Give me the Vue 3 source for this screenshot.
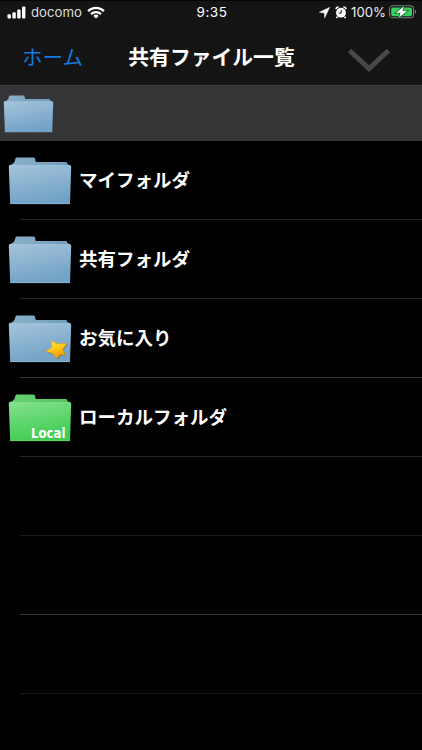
<template>
    <div class="screen">
        <svg class="defs" width="0" height="0">
            <defs>
                <linearGradient id="blueFront" x1="0.1" y1="0" x2="0.4" y2="1">
                    <stop offset="0" stop-color="#a3c3da"/>
                    <stop offset="1" stop-color="#72a2c6"/>
                </linearGradient>
                <linearGradient id="blueBack" x1="0" y1="0" x2="1" y2="0">
                    <stop offset="0" stop-color="#8bb1cb"/>
                    <stop offset="1" stop-color="#6f9cbb"/>
                </linearGradient>
                <linearGradient id="greenFront" x1="0.1" y1="0" x2="0.4" y2="1">
                    <stop offset="0" stop-color="#82e08b"/>
                    <stop offset="1" stop-color="#40cc53"/>
                </linearGradient>
                <linearGradient id="greenBack" x1="0" y1="0" x2="1" y2="0">
                    <stop offset="0" stop-color="#66d372"/>
                    <stop offset="1" stop-color="#51c260"/>
                </linearGradient>
                <linearGradient id="gold" x1="0" y1="0" x2="0.4" y2="1">
                    <stop offset="0" stop-color="#ffee55"/>
                    <stop offset="0.5" stop-color="#ffcb1c"/>
                    <stop offset="1" stop-color="#f29c08"/>
                </linearGradient>
            </defs>
        </svg>

        <header class="top">
            <div class="status">
                <div class="status-left">
                    <svg class="signal" width="19" height="13" viewBox="0 0 19 13" fill="#fff">
                        <rect x="0.5" y="8.2" width="3.4" height="4.3" rx="1"/>
                        <rect x="5.4" y="6.2" width="3.4" height="6.3" rx="1"/>
                        <rect x="10.2" y="3.5" width="3.4" height="9" rx="1"/>
                        <rect x="15" y="0.5" width="3.4" height="12" rx="1"/>
                    </svg>
                    <span class="carrier">docomo</span>
                    <svg width="18" height="13" viewBox="0 0 18 13" fill="none" stroke="#fff">
                        <path d="M1.1 5.1a11.2 11.2 0 0 1 15.8 0" stroke-width="2.3"/>
                        <path d="M4 8.1a7.1 7.1 0 0 1 10 0" stroke-width="2.2"/>
                        <path d="M9 12.6L6.3 9.9a3.9 3.9 0 0 1 5.4 0z" fill="#fff" stroke="none"/>
                    </svg>
                </div>
                <span class="clock">9:35</span>
                <div class="status-right">
                    <svg width="11" height="11" viewBox="0 0 11 11"><path d="M10.7 0.3L0.3 5.3l5 0.6 0.4 5z" fill="#fff" stroke="#fff" stroke-width="0.4"/></svg>
                    <svg class="alarm" width="12" height="13" viewBox="0 0 12 13">
                        <path d="M1 3.2A2.6 2.6 0 0 1 3.6 1M8.4 1a2.6 2.6 0 0 1 2.6 2.2M2.4 10.8l-1 1.2M9.6 10.8l1 1.2" fill="none" stroke="#fff" stroke-width="1.7"/>
                        <circle cx="6" cy="6.7" r="4.9" fill="#fff"/>
                        <path d="M6.2 3.9v3.2H3.7" fill="none" stroke="#161616" stroke-width="1"/>
                    </svg>
                    <span class="percent">100%</span>
                    <svg width="28" height="14" viewBox="0 0 28 14">
                        <rect x="0.6" y="0.8" width="24" height="12" rx="3.4" fill="none" stroke="#7c7c7c" stroke-width="1.1"/>
                        <rect x="2.2" y="2.4" width="20.8" height="8.8" rx="2" fill="#32d25c"/>
                        <path d="M26 4.8a2.2 2.2 0 0 1 0 4z" fill="#7c7c7c"/>
                        <path class="bolt" d="M14.8 1.4L6.8 7.8h4.6l-1.4 4.8 8.400-6.800h-4.900z"/>
                    </svg>
                </div>
            </div>
            <nav class="nav">
                <a class="home">ホーム</a>
                <h1>共有ファイル一覧</h1>
                <svg class="chevron" width="44" height="26" viewBox="0 0 44 26">
                    <path d="M2.5 2.5L22 20.5 41.5 2.5" fill="none" stroke="#484848" stroke-width="5"/>
                </svg>
            </nav>
        </header>

        <div class="crumbs">
            <svg class="crumb-folder" viewBox="0 0 64 48">
                <path :d="backShape" fill="url(#blueBack)"/>
                <path :d="frontShape" fill="url(#blueFront)"/>
            </svg>
        </div>

        <ul class="list">
            <li v-for="(row, i) in rows" :key="i" :class="row.line">
                <template v-if="row.name">
                    <svg class="folder" width="64" height="48" viewBox="0 0 64 48">
                        <path :d="backShape" :fill="`url(#${row.color}Back)`"/>
                        <path :d="frontShape" :fill="`url(#${row.color}Front)`"/>
                        <path d="M2.2 46.7H62" :class="['edge', row.color]"/>
                        <g v-if="row.star">
                            <path :d="starShape" transform="translate(0.7 0.9)" fill="#6b5a3a" opacity="0.6"/>
                            <path :d="starShape" fill="url(#gold)" stroke="#dd9a14" stroke-width="0.5" stroke-linejoin="round"/>
                        </g>
                        <text v-if="row.tag" x="23" y="43.6" textLength="34.5" lengthAdjust="spacingAndGlyphs" class="tag">{{ row.tag }}</text>
                    </svg>
                    <span class="name">{{ row.name }}</span>
                </template>
            </li>
        </ul>
    </div>
</template>

<script setup>
    const backShape = 'M1 10V8.5L4.5 7L6.5 5L7.5 1.5Q7.9 0.5 9 0.5H25.5Q26.7 0.5 26.9 1.5L27.8 5H58.5L59.5 7L62.8 9V10z';
    const frontShape = 'M2 8H61.5Q63.2 8 63.2 9.8L62 47H2.2L0.8 9.8Q0.8 8 2 8z';
    const starShape = 'M43 25.6L49.5 28.7L58.8 28.6L54.8 34.2L57.2 40.6L52 39.4L48.7 43.6L45.2 38.8L37.8 36.2L44 32.4z';

    const rows = [
        { name: 'マイフォルダ', color: 'blue', line: 'mid' },
        { name: '共有フォルダ', color: 'blue', line: 'mid' },
        { name: 'お気に入り', color: 'blue', star: true, line: 'bright' },
        { name: 'ローカルフォルダ', color: 'green', tag: 'Local', line: 'mid' },
        { line: 'dim' },
        { line: 'bright' },
        { line: 'dim' },
        { line: 'none' }
    ];
</script>

<style>
    body{
        margin: 0;
        background: #000;
    }
</style>

<style scoped>
    .screen{
        width: 422px;
        height: 750px;
        overflow: hidden;
        background: #000;
        color: #fff;
        font-family: "Liberation Sans", "Noto Sans CJK JP", sans-serif;
    }
    .defs{
        display: block;
    }
    .top{
        height: 85px;
        background: #141414;
        box-sizing: border-box;
        border-top: 1px solid #050505;
    }
    .status{
        display: grid;
        grid-template-columns: 1fr auto 1fr;
        align-items: center;
        height: 22px;
        padding: 0 5px 0 7px;
        font-family: Inter, "Liberation Sans", sans-serif;
        font-size: 13.2px;
        line-height: 22px;
    }
    .status-left, .status-right{
        display: flex;
        align-items: center;
    }
    .status-right{
        justify-content: flex-end;
    }
    .carrier{
        margin: 0 5px;
        color: #ddd;
    }
    .clock{
        font-size: 13.5px;
        letter-spacing: 0.5px;
    }
    .alarm{
        margin: 0 4px 0 5px;
    }
    .percent{
        margin-right: 3px;
        color: #eee;
    }
    .bolt{
        fill: #fff;
        stroke: #17602c;
        stroke-width: 1.6;
        paint-order: stroke;
    }
    .nav{
        display: grid;
        grid-template-columns: 1fr auto 1fr;
        align-items: center;
        height: 62px;
        padding: 8px 31px 0 22px;
        box-sizing: border-box;
    }
    .nav h1{
        margin: 0 -5px 0 5px;
        font-size: 20.8px;
        font-weight: 700;
        line-height: 30px;
    }
    .home{
        color: #1479dc;
        font-size: 20.5px;
        line-height: 30px;
    }
    .chevron{
        justify-self: end;
        margin-top: 5px;
    }
    .crumbs{
        display: flex;
        align-items: center;
        height: 56px;
        padding-left: 3px;
        box-sizing: border-box;
        background: #353537;
        border-top: 1px solid #414143;
    }
    .crumb-folder{
        width: 51px;
        height: 38px;
    }
    .list{
        margin: 0;
        padding: 0;
        list-style: none;
    }
    li{
        display: flex;
        align-items: center;
        height: 79px;
        padding-left: 8px;
        box-sizing: border-box;
        background: linear-gradient(var(--line), var(--line)) 20px 100% / 100% 1px no-repeat;
    }
    .mid{
        --line: #242426;
    }
    .bright{
        --line: #38383a;
    }
    .dim{
        --line: #1a1a1b;
    }
    .none{
        --line: transparent;
    }
    .folder{
        flex: none;
    }
    .edge{
        fill: none;
        stroke-width: 0.6;
    }
    .edge.blue{
        stroke: #98bdd6;
    }
    .edge.green{
        stroke: #73dd80;
    }
    .tag{
        fill: #fff;
        font-family: "DejaVu Sans", sans-serif;
        font-size: 13.6px;
        font-weight: 700;
    }
    .name{
        margin-left: 7px;
        padding-top: 1px;
        font-size: 18.5px;
        font-weight: 700;
        line-height: 28px;
    }
</style>
